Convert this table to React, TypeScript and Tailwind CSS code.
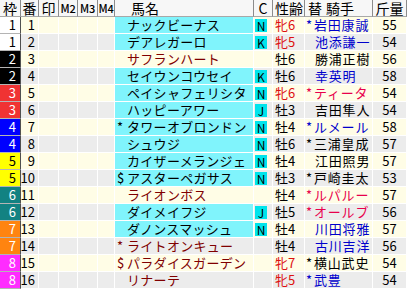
import React from "react";

type Row = {
  waku: number;
  ban: number;
  pre: string;
  name: string;
  cyan: boolean;
  c: string;
  sex: string;
  age: number;
  jp: string;
  jn: string;
  jc: "blue" | "black" | "red";
  kin: number;
};

const rows: Row[] = [
  { waku: 1, ban: 1, pre: "", name: "ナックビーナス", cyan: true, c: "N", sex: "牝", age: 6, jp: "*", jn: "岩田康誠", jc: "blue", kin: 55 },
  { waku: 1, ban: 2, pre: "", name: "デアレガーロ", cyan: true, c: "K", sex: "牝", age: 5, jp: "", jn: "池添謙一", jc: "blue", kin: 54 },
  { waku: 2, ban: 3, pre: "", name: "サフランハート", cyan: false, c: "", sex: "牡", age: 6, jp: "", jn: "勝浦正樹", jc: "black", kin: 56 },
  { waku: 2, ban: 4, pre: "", name: "セイウンコウセイ", cyan: true, c: "K", sex: "牡", age: 6, jp: "", jn: "幸英明", jc: "blue", kin: 58 },
  { waku: 3, ban: 5, pre: "", name: "ペイシャフェリシタ", cyan: true, c: "N", sex: "牝", age: 6, jp: "*", jn: "ティータ", jc: "red", kin: 54 },
  { waku: 3, ban: 6, pre: "", name: "ハッピーアワー", cyan: true, c: "J", sex: "牡", age: 3, jp: "", jn: "吉田隼人", jc: "black", kin: 54 },
  { waku: 4, ban: 7, pre: "*", name: "タワーオブロンドン", cyan: true, c: "N", sex: "牡", age: 4, jp: "*", jn: "ルメール", jc: "blue", kin: 58 },
  { waku: 4, ban: 8, pre: "", name: "シュウジ", cyan: true, c: "N", sex: "牡", age: 6, jp: "*", jn: "三浦皇成", jc: "black", kin: 57 },
  { waku: 5, ban: 9, pre: "", name: "カイザーメランジェ", cyan: true, c: "N", sex: "牡", age: 4, jp: "", jn: "江田照男", jc: "black", kin: 57 },
  { waku: 5, ban: 10, pre: "$", name: "アスターペガサス", cyan: true, c: "N", sex: "牡", age: 3, jp: "*", jn: "戸崎圭太", jc: "black", kin: 53 },
  { waku: 6, ban: 11, pre: "", name: "ライオンボス", cyan: false, c: "", sex: "牡", age: 4, jp: "*", jn: "ルパルー", jc: "red", kin: 57 },
  { waku: 6, ban: 12, pre: "", name: "ダイメイフジ", cyan: true, c: "J", sex: "牡", age: 5, jp: "*", jn: "オールブ", jc: "red", kin: 56 },
  { waku: 7, ban: 13, pre: "", name: "ダノンスマッシュ", cyan: true, c: "N", sex: "牡", age: 4, jp: "", jn: "川田将雅", jc: "blue", kin: 57 },
  { waku: 7, ban: 14, pre: "*", name: "ライトオンキュー", cyan: false, c: "", sex: "牡", age: 4, jp: "", jn: "古川吉洋", jc: "blue", kin: 56 },
  { waku: 8, ban: 15, pre: "$", name: "パラダイスガーデン", cyan: false, c: "", sex: "牝", age: 7, jp: "*", jn: "横山武史", jc: "black", kin: 54 },
  { waku: 8, ban: 16, pre: "", name: "リナーテ", cyan: false, c: "", sex: "牝", age: 5, jp: "*", jn: "武豊", jc: "blue", kin: 54 },
];

const wakuCls: Record<number, string> = {
  1: "bg-white text-black",
  2: "bg-black text-white",
  3: "bg-[#f03333] text-white",
  4: "bg-[#0000ff] text-white",
  5: "bg-[#ffff00] text-black",
  6: "bg-[#128282] text-white",
  7: "bg-[#ff8410] text-white",
  8: "bg-[#ff2cff] text-white",
};

const jcCls = {
  blue: "text-[#0000cc]",
  black: "text-black",
  red: "text-[#e8004c]",
};

const font = { fontFamily: '"Noto Sans CJK JP", "Noto Sans", sans-serif' };

export default function App() {
  const hd =
    "h-[17px] border-r border-b border-r-[#8c8c8c] border-b-[#a8a8a8] bg-[#f7f7f7] text-[14px] leading-[16px] flex items-center text-black overflow-hidden";
  return (
    <div className="w-[410px] h-[292px] bg-white overflow-hidden" style={font}>
      <div className="grid grid-cols-[21px_18px_20px_19px_20px_17px_139px_19px_32px_68px_34px]">
        <div className={`${hd} justify-center`}>枠</div>
        <div className={`${hd} justify-center`}>番</div>
        <div className={`${hd} justify-center`}>印</div>
        <div className={`${hd} justify-center !text-[11px] font-medium tracking-[-0.3px]`}>M2</div>
        <div className={`${hd} justify-center !text-[11px] font-medium tracking-[-0.3px]`}>M3</div>
        <div className={`${hd} justify-center !text-[11px] font-medium tracking-[-0.3px]`}>M4</div>
        <div className={`${hd} pl-[16px]`}>馬名</div>
        <div className={`${hd} justify-center`}>C</div>
        <div className={`${hd} pl-[2px]`}>性齢</div>
        <div className={`${hd} pl-[3px] gap-[4px]`}>
          <span>替</span>
          <span>騎手</span>
        </div>
        <div className={`${hd} justify-center`}>斤量</div>

        {rows.map((r, i) => {
          const bg = i % 2 === 0 ? "bg-[#fffde6]" : "bg-[#ececec]";
          const cell = `h-[17px] border-r border-b border-white ${bg} text-[13px] leading-[16px] flex items-center`;
          return (
            <React.Fragment key={r.ban}>
              <div
                className={`h-[17px] border-r border-b border-r-[#505050] border-b-[#b4b4b4] ${wakuCls[r.waku]} text-[13px] leading-[16px] flex items-center justify-end pr-[4px]`}
              >
                {r.waku}
              </div>
              <div className={`${cell} justify-end pr-[3px] text-black`}>{r.ban}</div>
              <div className={cell}></div>
              <div className={cell}></div>
              <div className={cell}></div>
              <div className={cell}></div>
              <div
                className={`h-[17px] border-r border-b border-white ${
                  r.cyan ? "bg-[#80f4fc] text-black" : `${bg} text-[#800000]`
                } text-[13px] leading-[16px] flex items-center pl-[2px] tracking-[0.3px] whitespace-nowrap`}
              >
                <span className="inline-block w-[10px]">{r.pre}</span>
                <span>{r.name}</span>
              </div>
              <div className={`${cell} pl-[1px]`}>
                {r.c && (
                  <span className="w-[12px] h-[13px] bg-[#00e4ec] text-black text-[12px] leading-[13px] flex items-center justify-center">
                    {r.c}
                  </span>
                )}
              </div>
              <div className={`${cell} pl-[2px] ${r.sex === "牝" ? "text-[#dd1111]" : "text-black"}`}>
                <span>{r.sex}</span>
                <span>{r.age}</span>
              </div>
              <div
                className={`${cell} ${jcCls[r.jc]} whitespace-nowrap ${r.jp ? "pl-[1px]" : "pl-[10px]"}`}
              >
                {r.jp && <span className="inline-block w-[8px]">{r.jp}</span>}
                <span className="tracking-[0.8px]">{r.jn}</span>
              </div>
              <div className={`${cell} justify-center text-black`}>{r.kin}</div>
            </React.Fragment>
          );
        })}
      </div>
    </div>
  );
}
